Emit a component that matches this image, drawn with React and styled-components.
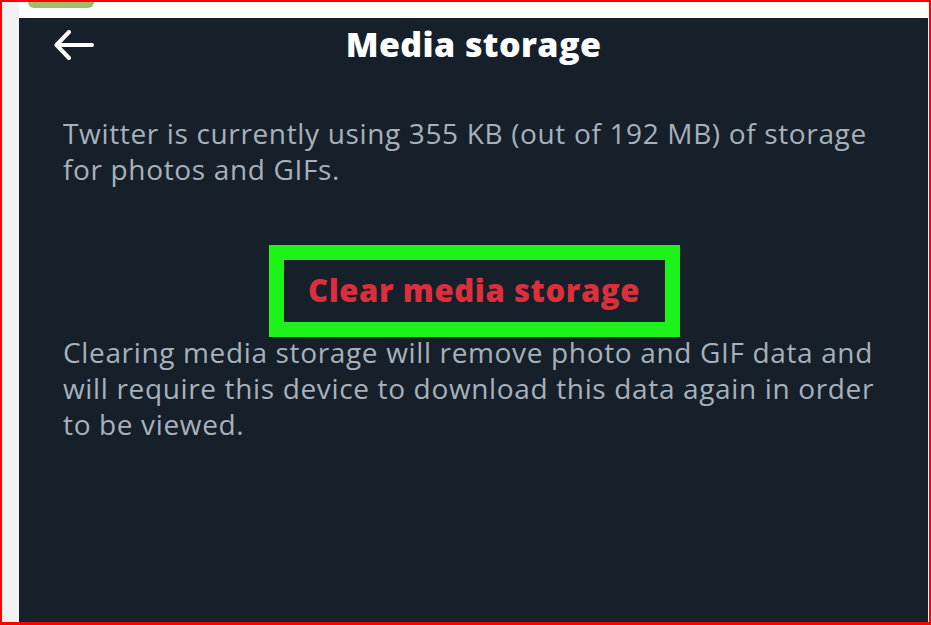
import React from 'react';
import styled, { createGlobalStyle } from 'styled-components';

const GlobalStyle = createGlobalStyle`
	html, body {
		margin: 0;
		padding: 0;
		background: #ffffff;
	}
	* {
		box-sizing: border-box;
	}
`;

export default function App() {
	return (
		<>
			<GlobalStyle />
			<Frame>
				<Pill />
				<SideStrip />
				<Main>
					<TopStrip />
					<Panel>
						<Header>
							<BackButton aria-label="Back">
								<svg width="40" height="32" viewBox="0 0 40 32" fill="none">
									<path
										d="M38 15H3M15 2L2.5 15L15 28"
										stroke="#ffffff"
										strokeWidth="4"
										strokeLinecap="round"
										strokeLinejoin="round"
									/>
								</svg>
							</BackButton>
							<Title>Media storage</Title>
						</Header>
						<Paragraph>
							Twitter is currently using 355 KB (out of 192 MB) of storage
							for photos and GIFs.
						</Paragraph>
						<ButtonRow>
							<HighlightBox>
								<ClearButton>Clear media storage</ClearButton>
							</HighlightBox>
						</ButtonRow>
						<Paragraph $top="-3px">
							Clearing media storage will remove photo and GIF data and
							will require this device to download this data again in order
							to be viewed.
						</Paragraph>
					</Panel>
				</Main>
			</Frame>
		</>
	);
}

const Frame = styled.div`
	position: relative;
	width: 931px;
	height: 625px;
	border-style: solid;
	border-color: #ff0000;
	border-width: 2px 2px 3px 2px;
	display: flex;
	overflow: hidden;
`;

const Pill = styled.div`
	position: absolute;
	top: -2px;
	left: 26px;
	width: 66px;
	height: 8px;
	border-radius: 0 0 6px 6px;
	background: #9dbf6c;
`;

const SideStrip = styled.div`
	width: 17px;
	flex-shrink: 0;
	background: #f2f2f2;
`;

const Main = styled.div`
	flex: 1;
	display: flex;
	flex-direction: column;
	border-right: 1px solid #ffffff;
`;

const TopStrip = styled.div`
	height: 16px;
	flex-shrink: 0;
	background: #ffffff;
`;

const Panel = styled.div`
	flex: 1;
	background: #16202b;
	display: flex;
	flex-direction: column;
	font-family: "Open Sans", "Liberation Sans", sans-serif;
`;

const Header = styled.div`
	position: relative;
	height: 56px;
	display: flex;
	align-items: center;
	justify-content: center;
	padding-bottom: 4px;
`;

const BackButton = styled.div`
	position: absolute;
	left: 35px;
	top: 12px;
	width: 40px;
	height: 32px;
	display: flex;
`;

const Title = styled.h1`
	margin: 0;
	color: #ffffff;
	font-size: 34px;
	font-weight: 800;
	letter-spacing: 0.4px;
`;

const Paragraph = styled.p`
	margin: ${(p) => p.$top || '41px'} 0 0 0;
	padding: 0 30px 0 44px;
	color: #a7b1bb;
	font-size: 28px;
	line-height: 36px;
	letter-spacing: 0.65px;
`;

const ButtonRow = styled.div`
	display: flex;
	justify-content: center;
	margin-top: 58px;
	padding-left: 1px;
`;

const HighlightBox = styled.div`
	width: 411px;
	height: 92px;
	border: 15px solid #1df21a;
	display: flex;
	align-items: center;
	justify-content: center;
`;

const ClearButton = styled.span`
	color: #dc2f3c;
	font-size: 31px;
	font-weight: 800;
	letter-spacing: 0.6px;
	margin-top: -3px;
`;
